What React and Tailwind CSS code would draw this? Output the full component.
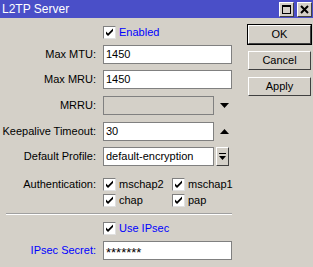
import React from 'react';

const font = { fontFamily: '"Liberation Sans", Arial, sans-serif' };

function Check() {
  return (
    <span className="w-[13px] h-[13px] bg-white border border-t-[#808080] border-l-[#808080] border-b-[#e0e0e0] border-r-[#e0e0e0] flex items-center justify-center shrink-0">
      <svg width="9" height="9" viewBox="0 0 9 9">
        <path d="M1 3.5 L3 5.5 L8 0.5 L8 3 L3 8 L1 6 Z" fill="#000" />
      </svg>
    </span>
  );
}

function CheckLabel({ text, blue }) {
  return (
    <label className="flex items-center gap-[3px] h-[13px]">
      <Check />
      <span className={blue ? 'text-[#0000ff]' : 'text-black'}>{text}</span>
    </label>
  );
}

function Label({ text, blue }) {
  return (
    <div className={`w-[96px] text-right shrink-0 ${blue ? 'text-[#0000ff]' : 'text-black'}`}>{text}</div>
  );
}

function Field({ value, width, disabled }) {
  return (
    <div
      className={`h-[19px] border border-[#808080] flex items-center pl-[2px] ${disabled ? 'bg-[#d4d0c8]' : 'bg-white'}`}
      style={{ width }}
    >
      {value}
    </div>
  );
}

function Btn({ text, def }) {
  return (
    <div className={`h-[21px] ${def ? 'border border-black' : 'border border-[#d4d0c8]'}`}>
      <div className="h-full border border-t-white border-l-white border-b-[#404040] border-r-[#404040] flex items-center justify-center text-black">
        {text}
      </div>
    </div>
  );
}

export default function App() {
  return (
    <div className="w-[313px] h-[267px] bg-[#d4d0c8] text-[11px] leading-[13px] overflow-hidden" style={font}>
      {/* title bar */}
      <div className="h-[18px] bg-[#4a4fc8] flex items-center justify-between pl-[2px] pr-[1px]">
        <span className="text-white text-[12px]">L2TP Server</span>
        <div className="flex gap-[3px]">
          <div className="w-[15px] h-[15px] bg-[#d4d0c8] border border-t-white border-l-white border-b-[#404040] border-r-[#404040] flex items-center justify-center">
            <div className="w-[9px] h-[9px] border border-black border-t-2" />
          </div>
          <div className="w-[15px] h-[15px] bg-[#d4d0c8] border border-t-white border-l-white border-b-[#404040] border-r-[#404040] flex items-center justify-center">
            <svg width="9" height="9" viewBox="0 0 9 9">
              <path d="M1 1 L8 8 M8 1 L1 8" stroke="#000" strokeWidth="2" />
            </svg>
          </div>
        </div>
      </div>

      <div className="flex">
        {/* form */}
        <div className="w-[240px] flex flex-col">
          <div className="flex items-center gap-[7px] mt-[8px] h-[13px]">
            <div className="w-[96px]" />
            <CheckLabel text="Enabled" blue />
          </div>

          <div className="flex items-center gap-[7px] mt-[6px]">
            <Label text="Max MTU:" />
            <Field value="1450" width={129} />
          </div>

          <div className="flex items-center gap-[7px] mt-[6px]">
            <Label text="Max MRU:" />
            <Field value="1450" width={129} />
          </div>

          <div className="flex items-center gap-[7px] mt-[7px]">
            <Label text="MRRU:" />
            <Field value="" width={111} disabled />
            <svg width="9" height="5" viewBox="0 0 9 5" className="ml-[-1px]">
              <path d="M0 0 L9 0 L4.5 5 Z" fill="#000" />
            </svg>
          </div>

          <div className="flex items-center gap-[7px] mt-[7px]">
            <Label text="Keepalive Timeout:" />
            <Field value="30" width={111} />
            <svg width="9" height="5" viewBox="0 0 9 5" className="ml-[-1px]">
              <path d="M0 5 L9 5 L4.5 0 Z" fill="#000" />
            </svg>
          </div>

          <div className="flex items-center gap-[7px] mt-[6px]">
            <Label text="Default Profile:" />
            <div className="flex items-center gap-[2px]">
              <Field value="default-encryption" width={111} />
              <div className="w-[13px] h-[19px] border border-t-white border-l-white border-b-[#404040] border-r-[#404040] flex items-center justify-center">
                <svg width="7" height="8" viewBox="0 0 7 8">
                  <path d="M0 0 H7 V1 H0 Z M0 3 L7 3 L3.5 7 Z" fill="#000" />
                </svg>
              </div>
            </div>
          </div>

          <div className="flex items-start gap-[7px] mt-[12px]">
            <Label text="Authentication:" />
            <div className="grid grid-cols-[69px_auto] gap-y-[3px]">
              <CheckLabel text="mschap2" />
              <CheckLabel text="mschap1" />
              <CheckLabel text="chap" />
              <CheckLabel text="pap" />
            </div>
          </div>

          <div className="ml-[6px] w-[226px] mt-[6px] border-t border-t-[#a0a0a0] border-b border-b-white" />

          <div className="flex items-center gap-[7px] mt-[7px] h-[13px]">
            <div className="w-[96px]" />
            <CheckLabel text="Use IPsec" blue />
          </div>

          <div className="flex items-center gap-[7px] mt-[6px]">
            <Label text="IPsec Secret:" blue />
            <Field value={<span className="text-[13px] leading-[13px] pt-[3px]">*******</span>} width={129} />
          </div>
        </div>

        {/* buttons */}
        <div className="ml-[7px] mt-[6px] w-[65px] flex flex-col gap-[5px]">
          <Btn text="OK" def />
          <Btn text="Cancel" />
          <Btn text="Apply" />
        </div>
      </div>
    </div>
  );
}
